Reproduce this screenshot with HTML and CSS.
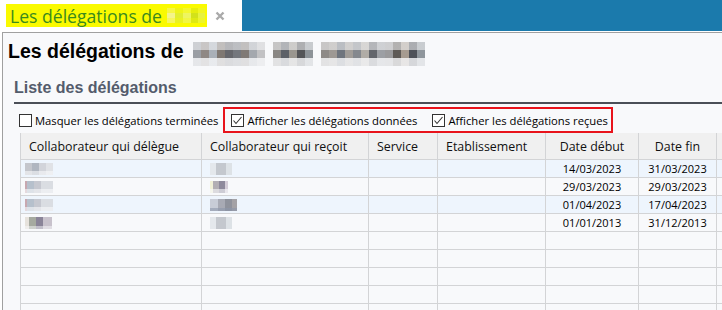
FILE: index.html
```html
<!DOCTYPE html>
<html lang="fr">
<head>
    <meta charset="UTF-8">
    <title>Les délégations</title>
    <link rel="stylesheet" href="styles.css">
</head>
<body>
    <div class="tabbar">
        <div class="tab">
            <span class="tab-title">Les délégations de <span class="blur blur-tab"></span></span>
            <svg class="tab-close" width="10" height="10" viewBox="0 0 10 10">
                <path d="M1.5 1.5 L8.5 8.5 M8.5 1.5 L1.5 8.5" stroke="#aaa" stroke-width="2.4" fill="none"/>
            </svg>
        </div>
        <div class="tab-fill"></div>
    </div>

    <div class="panel">
        <h1 class="page-title">Les délégations de <span class="blur blur-title"></span></h1>

        <div class="section">
            <h2 class="section-title">Liste des délégations</h2>

            <div class="filters">
                <label class="check check-first"><span class="box"></span>Masquer les délégations terminées</label>
                <div class="filters-hl">
                    <label class="check">
                        <span class="box"><svg width="11" height="11" viewBox="0 0 11 11"><path d="M1.5 5.5 L4 8.5 L9.5 2" stroke="#333" stroke-width="1.1" fill="none"/></svg></span>
                        Afficher les délégations données
                    </label>
                    <label class="check check-last">
                        <span class="box"><svg width="11" height="11" viewBox="0 0 11 11"><path d="M1.5 5.5 L4 8.5 L9.5 2" stroke="#333" stroke-width="1.1" fill="none"/></svg></span>
                        Afficher les délégations reçues
                    </label>
                </div>
            </div>

            <table class="grid">
                <colgroup>
                    <col style="width:182px">
                    <col style="width:167px">
                    <col style="width:69px">
                    <col style="width:108px">
                    <col style="width:93px">
                    <col style="width:78px">
                    <col style="width:40px">
                </colgroup>
                <thead>
                    <tr class="head">
                        <th>Collaborateur qui délègue</th>
                        <th>Collaborateur qui reçoit</th>
                        <th>Service</th>
                        <th>Etablissement</th>
                        <th class="center">Date début</th>
                        <th class="center">Date fin</th>
                        <th></th>
                    </tr>
                </thead>
                <tbody>
                    <tr class="alt">
                        <td><span class="blur blur-name n1"></span></td>
                        <td><span class="blur blur-name n2"></span></td>
                        <td></td><td></td>
                        <td class="date">14/03/2023</td>
                        <td class="date">31/03/2023</td>
                        <td></td>
                    </tr>
                    <tr>
                        <td><span class="blur blur-name n3"></span></td>
                        <td><span class="blur blur-name n4"></span></td>
                        <td></td><td></td>
                        <td class="date">29/03/2023</td>
                        <td class="date">29/03/2023</td>
                        <td></td>
                    </tr>
                    <tr class="alt">
                        <td><span class="blur blur-name n3"></span></td>
                        <td><span class="blur blur-name n5"></span></td>
                        <td></td><td></td>
                        <td class="date">01/04/2023</td>
                        <td class="date">17/04/2023</td>
                        <td></td>
                    </tr>
                    <tr>
                        <td><span class="blur blur-name n6"></span></td>
                        <td><span class="blur blur-name n2"></span></td>
                        <td></td><td></td>
                        <td class="date">01/01/2013</td>
                        <td class="date">31/12/2013</td>
                        <td></td>
                    </tr>
                    <tr><td></td><td></td><td></td><td></td><td></td><td></td><td></td></tr>
                    <tr><td></td><td></td><td></td><td></td><td></td><td></td><td></td></tr>
                    <tr><td></td><td></td><td></td><td></td><td></td><td></td><td></td></tr>
                    <tr><td></td><td></td><td></td><td></td><td></td><td></td><td></td></tr>
                    <tr><td></td><td></td><td></td><td></td><td></td><td></td><td></td></tr>
                </tbody>
            </table>
        </div>
    </div>
</body>
</html>
```

FILE: styles.css
```css
body {
    margin: 0;
    width: 722px;
    height: 310px;
    overflow: hidden;
    background-color: #fff;
    font-family: "Open Sans", "Noto Sans", sans-serif;
    color: #111;
}

/* tab strip */
.tabbar {
    display: flex;
    height: 31px;
}
.tab {
    width: 242px;
    display: flex;
    align-items: center;
    padding-left: 6px;
    box-sizing: border-box;
}
.tab-title {
    display: flex;
    align-items: center;
    height: 23px;
    padding: 0 2px 0 4px;
    background-color: #fafa00;
    color: #3b8a1e;
    font-size: 17.6px;
    white-space: pre;
}
.tab-close {
    margin-left: 8px;
    margin-top: 1px;
}
.tab-fill {
    flex: 1;
    background-color: #1b7aac;
}

/* pixelated names */
.blur {
    display: inline-block;
}
.blur-tab {
    width: 38px;
    height: 15px;
    background:
        linear-gradient(to bottom, rgba(250, 250, 0, 0.5) 0 5px, transparent 5px 10px, rgba(250, 250, 0, 0.3) 10px),
        linear-gradient(to right, #f4f48a 0 8px, #e2ee30 8px 16px, #eef560 16px 24px, #d2e21a 24px 31px, #e8f240 31px);
}
.blur-title {
    width: 232px;
    height: 24px;
    margin-left: 4px;
    vertical-align: -8px;
    background:
        linear-gradient(to bottom, rgba(248, 249, 251, 0.55) 0 8px, transparent 8px 16px, rgba(248, 249, 251, 0.8) 16px),
        linear-gradient(to right,
            #9a9ea4 0 8px, #8f8884 8px 16px, #a9b0b8 16px 24px,
            #7f7872 24px 32px, #66676c 32px 40px, #74777d 40px 48px, #807a76 48px 56px, #a4a8ae 56px 64px, #c2c2c4 64px 72px,
            #f8f9fb 72px 80px,
            #8a8784 80px 88px, #5d6168 88px 96px, #9a968f 96px 104px, #545558 104px 112px, #8d9398 112px 120px,
            #f8f9fb 120px 128px,
            #8e8a87 128px 136px, #9e9994 136px 144px, #6f757e 144px 152px, #a09c98 152px 160px, #84888e 160px 168px,
            #b0aca6 168px 176px, #62656b 176px 184px, #9c9fa4 184px 192px, #9a9a9c 192px 200px, #5e5a56 200px 208px,
            #a69b90 208px 216px, #4e5158 216px 224px, #8f969c 224px 232px);
}
.blur-name {
    height: 12px;
    margin-top: 2px;
    vertical-align: top;
    background:
        linear-gradient(to bottom, transparent 0 8px, rgba(248, 249, 251, 0.6) 8px),
        linear-gradient(to right, #c4c6cc 0 7px, #b0b6c0 7px 14px, #d2d4da 14px 21px, #e0e2e6 21px);
}
.n1 { width: 28px; margin-left: -4px; }
.n2 { width: 22px; margin-left: 0; background: linear-gradient(to right, #e4e8ec 0 6px, #c4c8ce 6px 16px, #dde2e6 16px); }
.n3 { width: 28px; margin-left: -4px; background:
        linear-gradient(to bottom, transparent 0 8px, rgba(248, 249, 251, 0.6) 8px),
        linear-gradient(to right, #c8a8b0 0 2px, #b6c0cc 2px 9px, #c6c8d0 9px 16px, #dadde2 16px); }
.n4 { width: 18px; margin-left: 0; background:
        linear-gradient(to bottom, transparent 0 8px, rgba(248, 249, 251, 0.6) 8px),
        linear-gradient(to right, #f0f0d8 0 3px, #b2aeb4 3px 9px, #8e8a9c 9px 15px, #d4cdd8 15px); }
.n5 { width: 27px; margin-left: 0; background:
        linear-gradient(to bottom, transparent 0 9px, rgba(140, 150, 170, 0.6) 9px),
        linear-gradient(to right, #c8ccd6 0 8px, #a8aab4 8px 15px, #8f929c 15px 22px, #a4a2a6 22px); }
.n6 { width: 27px; margin-left: -4px; background:
        linear-gradient(to bottom, transparent 0 9px, rgba(248, 249, 251, 0.5) 9px),
        linear-gradient(to right, #e6e2dc 0 4px, #a6aaa0 4px 11px, #8a8498 11px 18px, #c8c2cc 18px); }

/* main panel */
.panel {
    margin: 1px 0 0 2px;
    height: 277px;
    overflow: hidden;
    border-top: 1px solid #a0a0a0;
    border-left: 1px solid #a0a0a0;
    background-color: #f8f9fb;
}
.page-title {
    margin: 0;
    height: 27px;
    padding: 6px 0 0 5px;
    font: bold 19.5px/24px "Liberation Sans", Arial, sans-serif;
    color: #000;
    white-space: nowrap;
}
.section {
    margin-left: 11px;
}
.section-title {
    margin: 12px 0 0;
    padding: 0 0 4px;
    font: bold 16px/20px "Liberation Sans", Arial, sans-serif;
    color: #545c6c;
    border-bottom: 2px solid #4b4f57;
}

/* filters */
.filters {
    display: flex;
    align-items: center;
    height: 26px;
    margin-top: 3px;
    padding-left: 5px;
}
.check {
    display: flex;
    align-items: center;
    font-size: 11.25px;
    color: #000;
    white-space: nowrap;
}
.check-first {
    margin-right: 5px;
}
.check-last {
    margin-left: 15px;
}
.box {
    display: flex;
    align-items: center;
    justify-content: center;
    width: 13px;
    height: 13px;
    margin-right: 3px;
    box-sizing: border-box;
    border: 1px solid #333;
    background-color: #fff;
}
.filters-hl {
    display: flex;
    align-items: center;
    height: 26px;
    box-sizing: border-box;
    padding: 0 3px 0 6px;
    border: 2px solid #e8131b;
}

/* grid */
.grid {
    margin-left: 6px;
    width: 737px;
    table-layout: fixed;
    border-spacing: 0;
    font-size: 11px;
}
.grid th,
.grid td {
    padding: 0 0 0 8px;
    border-right: 1px solid #d3d4d6;
    border-bottom: 1px solid #d3d4d6;
    white-space: nowrap;
    overflow: hidden;
}
.grid th:first-child,
.grid td:first-child {
    border-left: 1px solid #d3d4d6;
}
.grid .head {
    height: 27px;
}
.grid th {
    background-color: #f0f0f0;
    font-size: 12.4px;
    font-weight: normal;
    text-align: left;
    color: #111;
}
.grid tbody tr {
    height: 18px;
}
.grid tbody tr.alt {
    background-color: #eef5fd;
}
.grid .center,
.grid .date {
    text-align: center;
    padding: 0;
}
.grid .date {
    color: #000;
}
```
